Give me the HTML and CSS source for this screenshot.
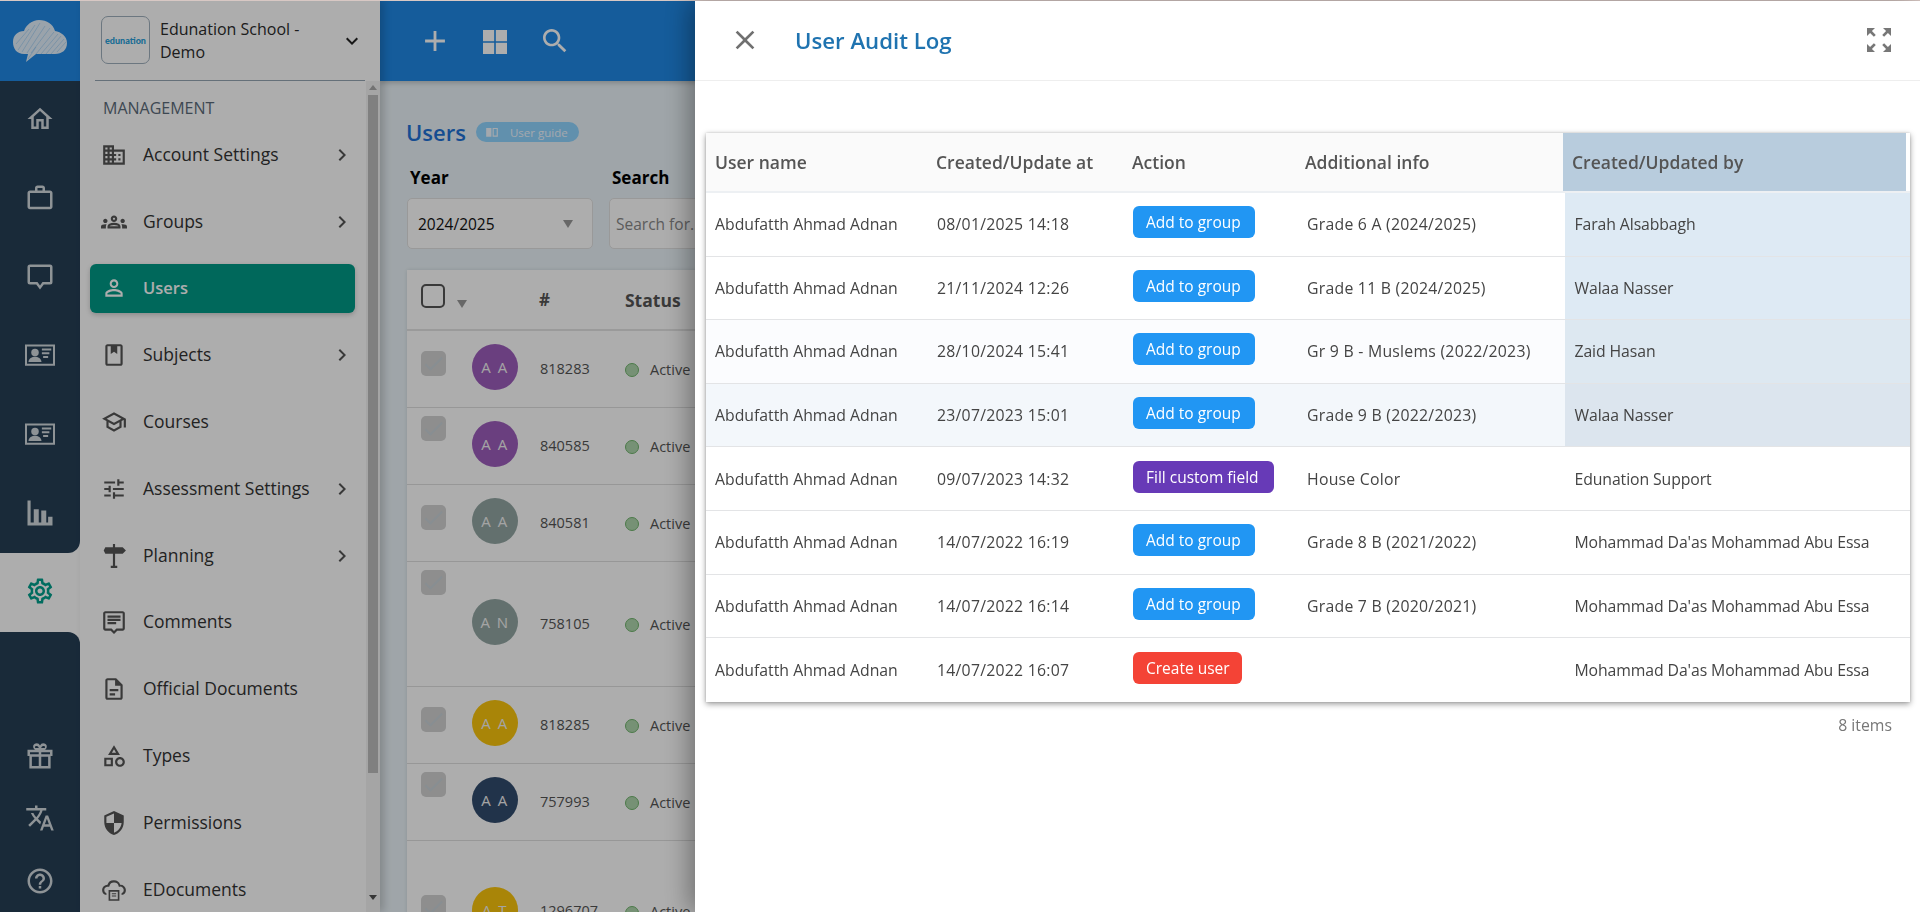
FILE: index.html
```html
<!DOCTYPE html>
<html lang="en">
<head>
<meta charset="utf-8">
<title>User Audit Log</title>
<link rel="stylesheet" href="styles.css">
</head>
<body>
<svg class="sprite" aria-hidden="true">
  <symbol id="i-home" viewBox="0 0 24 24"><path d="M12 5.69l5 4.5V18h-2v-6H9v6H7v-7.81l5-4.5M12 3L2 12h3v8h6v-6h2v6h6v-8h3L12 3z"/></symbol>
  <symbol id="i-work" viewBox="0 0 24 24"><path d="M14 6V4h-4v2h4zM4 8v11h16V8H4zm16-2c1.11 0 2 .89 2 2v11c0 1.11-.89 2-2 2H4c-1.11 0-2-.89-2-2l.01-11c0-1.11.88-2 1.99-2h4V4c0-1.11.89-2 2-2h4c1.11 0 2 .89 2 2v2h4z"/></symbol>
  <symbol id="i-bubble" viewBox="0 0 24 24"><path d="M4 2h16a2 2 0 0 1 2 2v12a2 2 0 0 1-2 2h-5l-3 4-3-4H4a2 2 0 0 1-2-2V4a2 2 0 0 1 2-2zm0 2v12h6l2 2.7 2-2.7h6V4H4z"/></symbol>
  <symbol id="i-card" viewBox="0 0 24 24"><path fill-rule="evenodd" d="M0 3.500h24v17H0v-17zm1.600 1.600v13.800h20.800V5.100H1.600z"/><circle cx="8" cy="10" r="3"/><path d="M2.800 17.500c0-2.900 3-4.200 5.200-4.200s5.200 1.300 5.200 4.200H2.800zM13.500 6.800h7.500v1.500h-7.500zM13.500 9.800h6v1.500h-6zM14.500 12.800h4v1.500h-4z"/></symbol>
  <symbol id="i-chart" viewBox="0 0 24 24"><path d="M2 2h2.500v20H2zM7 9h4v13H7zM13 10h4v12h-4zM18.500 15H22v7h-3.500zM2 19.500h20V22H2z"/></symbol>
  <symbol id="i-gear" viewBox="0 0 24 24"><path d="M19.430 12.980c.04-.32.07-.64.07-.98 0-.34-.03-.66-.07-.98l2.110-1.650c.19-.15.24-.42.12-.64l-2-3.460c-.09-.16-.26-.25-.44-.25-.06 0-.12.01-.17.03l-2.490 1c-.52-.4-1.080-.73-1.690-.98l-.38-2.650C14.460 2.180 14.250 2 14 2h-4c-.25 0-.46.18-.49.42l-.38 2.650c-.61.25-1.170.59-1.690.98l-2.490-1c-.06-.02-.12-.03-.18-.03-.17 0-.34.09-.43.25l-2 3.460c-.13.22-.07.49.12.64l2.110 1.650c-.04.32-.07.65-.07.98 0 .33.03.66.07.98l-2.110 1.650c-.19.15-.24.42-.12.64l2 3.460c.09.16.26.25.44.25.06 0 .12-.01.17-.03l2.490-1c.52.4 1.080.73 1.690.98l.38 2.650c.03.24.24.42.49.42h4c.25 0 .46-.18.49-.42l.38-2.650c.61-.25 1.170-.59 1.690-.98l2.490 1c.06.02.12.03.18.03.17 0 .34-.09.43-.25l2-3.460c.12-.22.07-.49-.12-.64l-2.110-1.650zm-1.980-1.710c.04.31.05.52.05.73 0 .21-.02.43-.05.73l-.14 1.130.89.7 1.080.84-.7 1.210-1.270-.51-1.040-.42-.9.68c-.43.32-.84.56-1.250.73l-1.060.43-.16 1.130-.2 1.350h-1.400l-.19-1.350-.16-1.130-1.060-.43c-.43-.18-.83-.41-1.230-.71l-.91-.7-1.060.43-1.270.51-.7-1.210 1.080-.84.89-.7-.14-1.130c-.03-.31-.05-.54-.05-.74s.02-.43.05-.73l.14-1.130-.89-.7-1.080-.84.7-1.210 1.270.51 1.040.42.9-.68c.43-.32.84-.56 1.250-.73l1.060-.43.16-1.130.2-1.350h1.390l.19 1.350.16 1.130 1.060.43c.43.18.83.41 1.230.71l.91.7 1.060-.43 1.270-.51.7 1.210-1.070.85-.89.7.14 1.130zM12 8c-2.210 0-4 1.790-4 4s1.790 4 4 4 4-1.790 4-4-1.790-4-4-4zm0 6c-1.100 0-2-.9-2-2s.9-2 2-2 2 .9 2 2-.9 2-2 2z"/></symbol>
  <symbol id="i-gift" viewBox="0 0 24 24"><path d="M2 7h20v5h-1.500v10h-17V12H2V7zm2 2v1.500h7V9H4zm9 0v1.500h7V9h-7zm-7.500 3.500V20H11v-7.500H5.500zm7.500 0V20h5.500v-7.500H13z"/><path d="M8.500 2a3 3 0 0 1 3.500 1.600A3 3 0 0 1 15.500 2c1.800.3 2.500 2.300 1.500 4l-1 1.200H8L7 6c-1-1.700-.3-3.700 1.500-4zm.3 2c-.8 0-1.100.9-.6 1.500H11c-.2-1-1-1.500-2.200-1.500zm6.400 0c-1.200 0-2 .5-2.200 1.500h2.800c.5-.6.2-1.500-.6-1.500z"/></symbol>
  <symbol id="i-translate" viewBox="0 0 24 24"><path d="M12.870 15.070l-2.540-2.510.03-.03c1.740-1.940 2.980-4.170 3.710-6.530H17V4h-7V2H8v2H1v1.990h11.170C11.500 7.920 10.440 9.750 9 11.350 8.070 10.320 7.300 9.190 6.690 8h-2c.73 1.630 1.730 3.170 2.980 4.560l-5.090 5.020L4 19l5-5 3.110 3.110.76-2.040zM18.500 10h-2L12 22h2l1.120-3h4.750L21 22h2l-4.500-12zm-2.620 7l1.620-4.330L19.120 17h-3.240z"/></symbol>
  <symbol id="i-help" viewBox="0 0 24 24"><path d="M11 18h2v-2h-2v2zm1-16C6.480 2 2 6.480 2 12s4.480 10 10 10 10-4.480 10-10S17.520 2 12 2zm0 18c-4.410 0-8-3.590-8-8s3.590-8 8-8 8 3.590 8 8-3.590 8-8 8zm0-14c-2.210 0-4 1.790-4 4h2c0-1.100.9-2 2-2s2 .9 2 2c0 2-3 1.750-3 5h2c0-2.250 3-2.500 3-5 0-2.210-1.790-4-4-4z"/></symbol>
  <symbol id="i-domain" viewBox="0 0 24 24"><path d="M12 7V3H2v18h20V7H12zM6 19H4v-2h2v2zm0-4H4v-2h2v2zm0-4H4V9h2v2zm0-4H4V5h2v2zm4 12H8v-2h2v2zm0-4H8v-2h2v2zm0-4H8V9h2v2zm0-4H8V5h2v2zm10 12h-8v-2h2v-2h-2v-2h2v-2h-2V9h8v10zm-2-8h-2v2h2v-2zm0 4h-2v2h2v-2z"/></symbol>
  <symbol id="i-groups" viewBox="0 0 24 24"><path d="M4 13c1.100 0 2-.9 2-2s-.9-2-2-2-2 .9-2 2 .9 2 2 2zm1.130 1.100c-.37-.06-.74-.1-1.130-.1-.99 0-1.930.21-2.780.58C.48 14.900 0 15.620 0 16.430V18h4.500v-1.610c0-.83.23-1.610.63-2.290zM20 13c1.100 0 2-.9 2-2s-.9-2-2-2-2 .9-2 2 .9 2 2 2zm4 3.430c0-.81-.48-1.530-1.220-1.850-.85-.37-1.790-.58-2.780-.58-.39 0-.76.04-1.130.1.4.68.63 1.460.63 2.290V18H24v-1.570zm-7.760-2.780C15.070 13.130 13.620 12.750 12 12.750c-1.620 0-3.070.39-4.240.9C6.680 14.130 6 15.210 6 16.390V18h12v-1.610c0-1.180-.68-2.260-1.760-2.740zM8.070 16c.09-.23.13-.39.91-.69.97-.38 1.990-.56 3.020-.56s2.050.18 3.020.56c.77.3.81.46.91.69H8.070zM12 8c.55 0 1 .45 1 1s-.45 1-1 1-1-.45-1-1 .45-1 1-1m0-2c-1.660 0-3 1.340-3 3s1.340 3 3 3 3-1.340 3-3-1.340-3-3-3z"/></symbol>
  <symbol id="i-person" viewBox="0 0 24 24"><path d="M12 5.900c1.160 0 2.100.94 2.100 2.100s-.94 2.100-2.100 2.100S9.900 9.160 9.900 8s.94-2.100 2.100-2.100m0 9c2.970 0 6.100 1.460 6.100 2.100v1.100H5.900V17c0-.64 3.130-2.100 6.100-2.100M12 4C9.790 4 8 5.790 8 8s1.790 4 4 4 4-1.790 4-4-1.790-4-4-4zm0 9c-2.670 0-8 1.340-8 4v3h16v-3c0-2.660-5.330-4-8-4z"/></symbol>
  <symbol id="i-book" viewBox="0 0 24 24"><path fill-rule="evenodd" d="M18 2H6c-1.100 0-2 .9-2 2v16c0 1.100.9 2 2 2h12c1.100 0 2-.9 2-2V4c0-1.100-.9-2-2-2zM6 4h3v7l3-2 3 2V4h3v16H6V4z"/></symbol>
  <symbol id="i-school" viewBox="0 0 24 24"><path d="M12 3L1 9l4 2.180v6L12 21l7-3.820v-6l2-1.090V17h2V9L12 3zm6.820 6L12 12.720 5.180 9 12 5.280 18.820 9zM17 15.990l-5 2.730-5-2.730v-3.720L12 15l5-2.730v3.720z"/></symbol>
  <symbol id="i-tune" viewBox="0 0 24 24"><path d="M3 17v2h6v-2H3zM3 5v2h10V5H3zm10 16v-2h8v-2h-8v-2h-2v6h2zM7 9v2H3v2h4v2h2V9H7zm14 4v-2H11v2h10zm-6-4h2V7h4V5h-4V3h-2v6z"/></symbol>
  <symbol id="i-sign" viewBox="0 0 24 24"><path d="M11 1h2v3h7l3 3-3 3h-7v11h2v2H9v-2h2V10H4L2.500 7 4 4h7z"/></symbol>
  <symbol id="i-chat" viewBox="0 0 24 24"><path d="M20 2H4c-1.100 0-2 .9-2 2v14c0 1.100.9 2 2 2h5l3 3 3-3h5c1.100 0 2-.9 2-2V4c0-1.100-.9-2-2-2zm0 16h-5.800L12 20.200 9.800 18H4V4h16v14zM6 12h8v2H6zm0-3h12v2H6zm0-3h12v2H6z"/></symbol>
  <symbol id="i-doc" viewBox="0 0 24 24"><path d="M8 16h5v2H8zm0-4h8v2H8zm6-10H6c-1.100 0-2 .9-2 2v16c0 1.100.89 2 1.990 2H18c1.100 0 2-.9 2-2V8l-6-6zm4 18H6V4h7v5h5v11z"/></symbol>
  <symbol id="i-category" viewBox="0 0 24 24"><path d="M12 2l-5.500 9h11L12 2zm0 3.840L13.930 9h-3.870L12 5.840zM17.500 13c-2.490 0-4.500 2.010-4.500 4.500s2.010 4.500 4.500 4.500 4.500-2.010 4.500-4.500-2.010-4.500-4.500-4.500zm0 7c-1.380 0-2.500-1.120-2.500-2.500s1.120-2.500 2.500-2.500 2.500 1.120 2.500 2.500-1.120 2.500-2.500 2.500zM3 21.500h8v-8H3v8zm2-6h4v4H5v-4z"/></symbol>
  <symbol id="i-shield" viewBox="0 0 24 24"><path d="M12 1L3 5v6c0 5.550 3.840 10.740 9 12 5.160-1.260 9-6.450 9-12V5l-9-4zm0 11h7c-.53 4.120-3.280 7.790-7 8.940V12H5V6.300l7-3.110V12z"/></symbol>
  <symbol id="i-cloud" viewBox="0 0 24 24"><path d="M12 3a6 6 0 0 1 5.700 4.200A5 5 0 0 1 23 12a4.800 4.800 0 0 1-4 4.700V15a3 3 0 0 0 2-3 3.200 3.200 0 0 0-3.600-3.100l-1 .1-.2-1A4.200 4.200 0 0 0 12 5a4.300 4.300 0 0 0-4.200 3.200l-.2.800-1 .1A3 3 0 0 0 3 12a3 3 0 0 0 2 3v1.700A5 5 0 0 1 1 12a5 5 0 0 1 5-4.900A6 6 0 0 1 12 3z"/><path fill-rule="evenodd" d="M7 12h10v10H7V12zm1.500 1.500v7h7v-7h-7zM10 15h4v1h-4zm0 2h4v1h-4z"/></symbol>
  <symbol id="i-right" viewBox="0 0 24 24"><path d="M10 6L8.590 7.410 13.170 12l-4.580 4.590L10 18l6-6z"/></symbol>
  <symbol id="i-down" viewBox="0 0 24 24"><path d="M16.590 8.590L12 13.170 7.410 8.590 6 10l6 6 6-6z"/></symbol>
  <symbol id="i-plus" viewBox="0 0 24 24"><path d="M19 13h-6v6h-2v-6H5v-2h6V5h2v6h6v2z"/></symbol>
  <symbol id="i-grid" viewBox="0 0 24 24"><path d="M0 0h11.200v11.200H0zM12.800 0H24v11.200H12.800zM0 12.800h11.200V24H0zM12.800 12.800H24V24H12.800z"/></symbol>
  <symbol id="i-search" viewBox="0 0 24 24"><path d="M15.500 14h-.79l-.28-.27C15.410 12.590 16 11.110 16 9.500 16 5.910 13.090 3 9.500 3S3 5.910 3 9.500 5.910 16 9.500 16c1.610 0 3.090-.59 4.230-1.570l.27.28v.79l5 4.990L20.490 19l-4.990-5zm-6 0C7.010 14 5 11.990 5 9.500S7.010 5 9.500 5 14 7.010 14 9.500 11.990 14 9.500 14z"/></symbol>
  <symbol id="i-close" viewBox="0 0 24 24"><path d="M19 6.410L17.590 5 12 10.590 6.410 5 5 6.410 10.590 12 5 17.590 6.410 19 12 13.410 17.590 19 19 17.590 13.410 12z"/></symbol>
  <symbol id="i-expand" viewBox="0 0 24 24"><path d="M15 3l2.300 2.300-2.890 2.870 1.420 1.420L18.700 6.700 21 9V3h-6zM3 9l2.300-2.300 2.870 2.890 1.420-1.420L6.700 5.300 9 3H3v6zm6 12l-2.300-2.300 2.890-2.870-1.420-1.420L5.300 17.300 3 15v6h6zm12-6l-2.300 2.300-2.870-2.890-1.420 1.420 2.890 2.870L15 21h6v-6z"/></symbol>
  <symbol id="i-check" viewBox="0 0 24 24"><path d="M9 16.170L4.830 12l-1.420 1.410L9 19 21 7l-1.410-1.410z"/></symbol>
  <symbol id="i-guide" viewBox="0 0 24 24"><path fill-rule="evenodd" d="M2 5h9v15H2zM13 5h9v15h-9zm2 2v11h5V7h-5z"/></symbol>
</svg>

<div class="app">
  <aside class="rail">
    <div class="rail-logo">
      <svg class="cloud" viewBox="0 0 54 43" aria-hidden="true">
        <path class="cloud-fill" d="M13 42l2-8H11C4 34 0 29 0 22c0-7 5-11 11-11 2-6 8-11 15-11 8 0 14 4 16 11 6 1 12 5 12 12s-5 11-12 11H23z"/>
        <path class="cloud-hatch" d="M3 24L16 9M5 30L22 5M9 32L27 3M14 33L32 6M18 33L37 8M23 34L41 12M28 34L45 14M33 34L48 16M38 34L51 19M44 32L53 22M15 39L23 27"/>
      </svg>
    </div>
    <nav class="rail-top">
      <div class="rail-item"><svg class="rail-icon"><use href="#i-home"/></svg></div>
      <div class="rail-item"><svg class="rail-icon"><use href="#i-work"/></svg></div>
      <div class="rail-item"><svg class="rail-icon"><use href="#i-bubble"/></svg></div>
      <div class="rail-item"><svg class="rail-icon"><use href="#i-card"/></svg></div>
      <div class="rail-item"><svg class="rail-icon"><use href="#i-card"/></svg></div>
      <div class="rail-item"><svg class="rail-icon"><use href="#i-chart"/></svg></div>
    </nav>
    <div class="rail-active"><svg class="rail-icon gear"><use href="#i-gear"/></svg></div>
    <nav class="rail-bottom">
      <div class="rail-item small"><svg class="rail-icon"><use href="#i-gift"/></svg></div>
      <div class="rail-item small"><svg class="rail-icon"><use href="#i-translate"/></svg></div>
      <div class="rail-item small"><svg class="rail-icon"><use href="#i-help"/></svg></div>
    </nav>
  </aside>

  <aside class="sidebar">
    <div class="school">
      <div class="school-logo">edunation</div>
      <div class="school-name">Edunation School - Demo</div>
      <svg class="school-caret"><use href="#i-down"/></svg>
    </div>
    <div class="side-body">
      <nav class="side-nav">
        <div class="side-label">MANAGEMENT</div>
        <a class="side-item"><span class="side-inner"><svg class="side-icon"><use href="#i-domain"/></svg><span class="side-text">Account Settings</span><svg class="side-more"><use href="#i-right"/></svg></span></a>
        <a class="side-item"><span class="side-inner"><svg class="side-icon"><use href="#i-groups"/></svg><span class="side-text">Groups</span><svg class="side-more"><use href="#i-right"/></svg></span></a>
        <a class="side-item active"><span class="side-inner"><svg class="side-icon"><use href="#i-person"/></svg><span class="side-text">Users</span></span></a>
        <a class="side-item"><span class="side-inner"><svg class="side-icon"><use href="#i-book"/></svg><span class="side-text">Subjects</span><svg class="side-more"><use href="#i-right"/></svg></span></a>
        <a class="side-item"><span class="side-inner"><svg class="side-icon"><use href="#i-school"/></svg><span class="side-text">Courses</span></span></a>
        <a class="side-item"><span class="side-inner"><svg class="side-icon"><use href="#i-tune"/></svg><span class="side-text">Assessment Settings</span><svg class="side-more"><use href="#i-right"/></svg></span></a>
        <a class="side-item"><span class="side-inner"><svg class="side-icon"><use href="#i-sign"/></svg><span class="side-text">Planning</span><svg class="side-more"><use href="#i-right"/></svg></span></a>
        <a class="side-item"><span class="side-inner"><svg class="side-icon"><use href="#i-chat"/></svg><span class="side-text">Comments</span></span></a>
        <a class="side-item"><span class="side-inner"><svg class="side-icon"><use href="#i-doc"/></svg><span class="side-text">Official Documents</span></span></a>
        <a class="side-item"><span class="side-inner"><svg class="side-icon"><use href="#i-category"/></svg><span class="side-text">Types</span></span></a>
        <a class="side-item"><span class="side-inner"><svg class="side-icon"><use href="#i-shield"/></svg><span class="side-text">Permissions</span></span></a>
        <a class="side-item"><span class="side-inner"><svg class="side-icon"><use href="#i-cloud"/></svg><span class="side-text">EDocuments</span></span></a>
      </nav>
      <div class="side-scroll">
        <span class="arrow-up"></span>
        <span class="thumb"></span>
        <span class="arrow-down"></span>
      </div>
    </div>
  </aside>

  <main class="main">
    <header class="topbar">
      <svg class="top-icon plus"><use href="#i-plus"/></svg>
      <svg class="top-icon grid"><use href="#i-grid"/></svg>
      <svg class="top-icon find"><use href="#i-search"/></svg>
    </header>
    <section class="content">
      <div class="title-row">
        <h1 class="page-title">Users</h1>
        <span class="guide"><svg class="guide-icon"><use href="#i-guide"/></svg>User guide</span>
      </div>
      <div class="filters">
        <div class="filter year">
          <label class="filter-label">Year</label>
          <div class="control">2024/2025<span class="control-caret"></span></div>
        </div>
        <div class="filter search">
          <label class="filter-label">Search</label>
          <div class="control placeholder">Search for...</div>
        </div>
      </div>
      <div class="user-card">
        <div class="user-head">
          <span class="head-box"></span><span class="head-caret"></span>
          <span class="head-num">#</span>
          <span class="head-status">Status</span>
        </div>
        <div class="user-row h77"><span class="check low"><svg><use href="#i-check"/></svg></span><span class="avatar purple">A A</span><span class="num">818283</span><span class="status"><i class="dot"></i>Active</span></div>
        <div class="user-row h77"><span class="check high"><svg><use href="#i-check"/></svg></span><span class="avatar purple">A A</span><span class="num">840585</span><span class="status"><i class="dot"></i>Active</span></div>
        <div class="user-row h77"><span class="check low"><svg><use href="#i-check"/></svg></span><span class="avatar grey">A A</span><span class="num">840581</span><span class="status"><i class="dot"></i>Active</span></div>
        <div class="user-row h125"><span class="check high"><svg><use href="#i-check"/></svg></span><span class="avatar grey">A N</span><span class="num">758105</span><span class="status"><i class="dot"></i>Active</span></div>
        <div class="user-row h77"><span class="check low"><svg><use href="#i-check"/></svg></span><span class="avatar amber">A A</span><span class="num">818285</span><span class="status"><i class="dot"></i>Active</span></div>
        <div class="user-row h77"><span class="check high"><svg><use href="#i-check"/></svg></span><span class="avatar navy">A A</span><span class="num">757993</span><span class="status"><i class="dot"></i>Active</span></div>
        <div class="user-row h142"><span class="check mid"><svg><use href="#i-check"/></svg></span><span class="avatar amber">A T</span><span class="num">1296707</span><span class="status"><i class="dot"></i>Active</span></div>
      </div>
    </section>
  </main>
</div>

<div class="overlay"></div>

<section class="panel">
  <header class="panel-head">
    <svg class="panel-close"><use href="#i-close"/></svg>
    <h2 class="panel-title">User Audit Log</h2>
    <svg class="panel-expand"><use href="#i-expand"/></svg>
  </header>
  <div class="audit">
    <table class="audit-table audit-head">
      <colgroup><col class="hc1"><col class="hc2"><col class="hc3"><col class="hc4"><col class="hc5"><col class="hc6"></colgroup>
      <thead>
        <tr><th>User name</th><th>Created/Update at</th><th>Action</th><th>Additional info</th><th class="sorted">Created/Updated by</th><th class="gutter"></th></tr>
      </thead>
    </table>
    <table class="audit-table audit-body">
      <colgroup><col class="bc1"><col class="bc2"><col class="bc3"><col class="bc4"><col class="bc5"></colgroup>
      <tbody>
        <tr><td>Abdufatth Ahmad Adnan</td><td>08/01/2025 14:18</td><td><span class="tag blue">Add to group</span></td><td>Grade 6 A (2024/2025)</td><td class="sorted">Farah Alsabbagh</td></tr>
        <tr><td>Abdufatth Ahmad Adnan</td><td>21/11/2024 12:26</td><td><span class="tag blue">Add to group</span></td><td>Grade 11 B (2024/2025)</td><td class="sorted">Walaa Nasser</td></tr>
        <tr class="tint-a"><td>Abdufatth Ahmad Adnan</td><td>28/10/2024 15:41</td><td><span class="tag blue">Add to group</span></td><td>Gr 9 B - Muslems (2022/2023)</td><td class="sorted">Zaid Hasan</td></tr>
        <tr class="tint-b"><td>Abdufatth Ahmad Adnan</td><td>23/07/2023 15:01</td><td><span class="tag blue">Add to group</span></td><td>Grade 9 B (2022/2023)</td><td class="sorted">Walaa Nasser</td></tr>
        <tr><td>Abdufatth Ahmad Adnan</td><td>09/07/2023 14:32</td><td><span class="tag purple-tag">Fill custom field</span></td><td>House Color</td><td>Edunation Support</td></tr>
        <tr><td>Abdufatth Ahmad Adnan</td><td>14/07/2022 16:19</td><td><span class="tag blue">Add to group</span></td><td>Grade 8 B (2021/2022)</td><td>Mohammad Da'as Mohammad Abu Essa</td></tr>
        <tr><td>Abdufatth Ahmad Adnan</td><td>14/07/2022 16:14</td><td><span class="tag blue">Add to group</span></td><td>Grade 7 B (2020/2021)</td><td>Mohammad Da'as Mohammad Abu Essa</td></tr>
        <tr><td>Abdufatth Ahmad Adnan</td><td>14/07/2022 16:07</td><td><span class="tag red">Create user</span></td><td></td><td>Mohammad Da'as Mohammad Abu Essa</td></tr>
      </tbody>
    </table>
  </div>
  <div class="audit-count">8 items</div>
</section>
</body>
</html>
```

FILE: styles.css
```css
* { box-sizing: border-box; }
html, body { margin: 0; height: 912px; overflow: hidden; }
body {
  border-top: 1px solid #d8c8c4;
  font-family: "Open Sans", "Noto Sans", "Liberation Sans", sans-serif;
  color: #333;
  background: #fff;
}
.sprite { position: absolute; width: 0; height: 0; overflow: hidden; }

.app { display: flex; height: 911px; overflow: hidden; }

/* icon rail */
.rail { width: 80px; flex: none; display: flex; flex-direction: column; background: #fff; }
.rail-logo { height: 80px; background: #1f88e5; display: flex; align-items: center; justify-content: center; }
.cloud { width: 54px; height: 43px; }
.cloud-fill { fill: #fff; opacity: .88; }
.cloud-hatch { stroke: #1f88e5; stroke-width: .6; opacity: .4; fill: none; }
.rail-top { height: 472px; background: #253e55; border-bottom-right-radius: 12px; }
.rail-active { height: 79px; display: flex; align-items: center; justify-content: center; padding-bottom: 4px; }
.rail-bottom { flex: 1; background: #253e55; border-top-right-radius: 12px; display: flex; flex-direction: column; justify-content: flex-end; }
.rail-item { height: 78.7px; display: flex; align-items: center; justify-content: center; padding-bottom: 2px; }
.rail-item.small { height: 62.5px; padding-bottom: 0; }
.rail-icon { width: 30px; height: 30px; fill: #d2d9de; }
.rail-icon.gear { fill: #00a08c; }

/* sidebar */
.sidebar { width: 300px; flex: none; background: #fff; display: flex; flex-direction: column; box-shadow: 4px 0 8px rgba(0,0,0,.18); z-index: 2; }
.school { height: 80px; margin: 0 15px; padding: 0 0 0 6px; display: flex; align-items: center; border-bottom: 1px solid #96a6b3; flex: none; }
.school-logo { width: 49px; height: 48px; border: 1px solid #9fb0bd; border-radius: 7px; display: flex; align-items: center; justify-content: center; font-family: "Lato", sans-serif; font-size: 9px; font-weight: 900; color: #29a0da; margin-top: -1px; }
.school-name { width: 160px; margin-left: 10px; font-size: 16px; line-height: 23px; color: #2b2b2b; }
.school-caret { width: 24px; height: 24px; margin-left: 20px; fill: #222; }
.side-body { flex: 1; min-height: 0; display: flex; }
.side-nav { flex: 1; min-width: 0; padding-left: 10px; overflow: hidden; }
.side-label { height: 40.5px; padding: 16px 0 0 13px; font-size: 16px; line-height: 22px; color: #5b6b7a; }
.side-item { height: 66.8px; display: flex; align-items: center; color: #333; }
.side-inner { width: 265px; height: 49px; display: flex; align-items: center; padding-left: 12px; border-radius: 6px; }
.side-icon { width: 26px; height: 26px; fill: #555; flex: none; margin-left: -1px; }
.side-text { flex: 1; margin: -2px 0 0 16px; font-size: 17.500px; white-space: nowrap; }
.side-more { width: 24px; height: 24px; fill: #555; flex: none; margin-right: 1px; }
.side-item.active .side-inner { background: #009a87; color: #fff; box-shadow: 0 2px 5px rgba(0,0,0,.2); font-weight: 600; }
.side-item.active .side-text { font-size: 16.500px; }
.side-item.active .side-icon { fill: #fff; }
.side-scroll { width: 14px; flex: none; background: #f3f3f3; display: flex; flex-direction: column; align-items: center; padding-top: 4px; }
.arrow-up { width: 0; height: 0; border: 4px solid transparent; border-top: 0; border-bottom: 5px solid #aaa; }
.arrow-down { width: 0; height: 0; border: 4px solid transparent; border-bottom: 0; border-top: 5px solid #505050; margin-top: 122px; }
.thumb { width: 10px; height: 678px; background: #bdbdbd; margin-top: 5px; }

/* main */
.main { flex: 1; min-width: 0; display: flex; flex-direction: column; background: #ebf4f9; }
.topbar { height: 80px; flex: none; background: #1f88e5; display: flex; align-items: center; box-shadow: 0 2px 5px rgba(0,0,0,.2); }
.top-icon { fill: #fff; flex: none; }
.top-icon.plus { width: 34px; height: 34px; margin-left: 38px; }
.top-icon.grid { width: 24px; height: 24px; margin-left: 31px; margin-top: 1px; }
.top-icon.find { width: 32px; height: 32px; margin-left: 32px; }
.content { padding: 38px 0 0 26px; }
.title-row { display: flex; align-items: center; height: 26px; }
.page-title { margin: 0; font-size: 22px; font-weight: 600; color: #1f72d6; line-height: 26px; }
.guide { margin-left: 10px; width: 103px; height: 20px; border-radius: 10px; background: #8fd4ff; color: #f2f8ff; font-size: 11.500px; display: flex; align-items: center; padding-left: 9px; }
.guide-icon { width: 14px; height: 14px; fill: #f2f8ff; margin-right: 11px; }
.filters { display: flex; gap: 16px; margin-top: 18px; padding-left: 1px; }
.filter-label { display: block; height: 35px; padding: 3px 0 0 3px; font-size: 17px; font-weight: 700; color: #000; line-height: 24px; }
.control { height: 51px; border: 1px solid #e2e2e2; border-radius: 5px; background: #fff; font-size: 15.500px; color: #111; display: flex; align-items: center; padding-left: 10px; position: relative; white-space: nowrap; overflow: hidden; }
.filter.year { width: 186px; }
.filter.search { width: 300px; }
.control.placeholder { color: #888; padding-left: 6px; }
.control-caret { position: absolute; right: 19px; top: 21px; border: 5px solid transparent; border-bottom: 0; border-top: 8px solid #999; }
.user-card { width: 1200px; margin: 21px 0 0 1px; background: #fff; box-shadow: 0 0 4px rgba(0,0,0,.12); }
.user-head { height: 61px; display: flex; align-items: center; border-bottom: 2px solid #e4e4e4; padding-left: 14px; }
.head-box { width: 24px; height: 24px; border: 2px solid #555; border-radius: 5px; margin-top: -8px; }
.head-caret { margin: 8px 0 0 12px; border: 5px solid transparent; border-bottom: 0; border-top: 8px solid #999; }
.head-num { margin-left: 72px; font-size: 17px; font-weight: 700; color: #555; }
.head-status { margin-left: 75px; font-size: 17.500px; font-weight: 700; color: #555; }
.user-row { display: grid; grid-template-columns: 51px 68px 85px 1fr; align-items: center; border-bottom: 1px solid #dfdfdf; padding-left: 14px; }
.h77 { height: 77px; }
.h125 { height: 125px; }
.h142 { height: 142px; }
.check { width: 25px; height: 25px; border-radius: 5px; background: #d1d1d1; display: block; align-self: start; }
.check svg { width: 25px; height: 25px; fill: #c9d1d7; display: block; }
.check.low { margin-top: 20px; }
.check.high { margin-top: 8px; }
.check.mid { align-self: center; margin-top: -8px; }
.avatar { width: 46px; height: 46px; border-radius: 50%; display: flex; align-items: center; justify-content: center; font-size: 15px; color: #f2f2f2; letter-spacing: 1.5px; margin-top: -4px; }
.avatar.purple { background: #9d5dbc; }
.avatar.grey { background: #92a6a3; }
.avatar.amber { background: #f9c40c; }
.avatar.navy { background: #324c6d; }
.num { font-size: 14.500px; color: #555; margin-top: -2px; }
.status { font-size: 14.500px; color: #555; display: flex; align-items: center; }
.dot { width: 14px; height: 14px; border-radius: 50%; background: #afd6ad; border: 1px solid #6fb46c; margin-right: 11px; margin-top: 2px; }

/* dim layer */
.overlay { position: fixed; inset: 1px 0 0 0; background: rgba(0,0,0,.32); z-index: 5; }

/* audit panel */
.panel { position: fixed; top: 1px; right: 0; bottom: 0; width: 1225px; background: #fff; z-index: 6; box-shadow: -6px 0 24px rgba(0,0,0,.35); display: flex; flex-direction: column; }
.panel-head { height: 80px; flex: none; display: flex; align-items: center; border-bottom: 1px solid #eee; padding: 0 25px 0 34px; }
.panel-close { width: 32px; height: 32px; fill: #707070; flex: none; margin-top: -1px; }
.panel-title { margin: 0 0 0 34px; flex: 1; font-size: 22.200px; font-weight: 600; color: #1f73b0; }
.panel-expand { width: 32px; height: 32px; fill: #777; flex: none; margin-top: -2px; }
.audit { margin: 52px 15px 0 11px; width: 1204px; box-shadow: 0 2px 6px rgba(0,0,0,.4), 0 0 2px rgba(0,0,0,.15); }
.audit-table { border-collapse: separate; border-spacing: 0; table-layout: fixed; width: 1204px; }
.hc1 { width: 221px; } .hc2 { width: 196px; } .hc3 { width: 173px; } .hc4 { width: 267px; } .hc5 { width: 343px; } .hc6 { width: 4px; }
.bc1 { width: 222px; } .bc2 { width: 196px; } .bc3 { width: 174px; } .bc4 { width: 267px; } .bc5 { width: 345px; }
.audit-head th { height: 60px; padding: 0 0 0 9px; background: #fafafa; border-bottom: 2px solid #edf0f3; text-align: left; font-size: 17.500px; font-weight: 600; color: #555; white-space: nowrap; }
.audit-head th.sorted { background: #b8ccdd; }
.audit-head th.gutter { padding: 0; background: #fff; }
.audit-body td { height: 63.6px; padding: 0 0 0 9px; border-bottom: 1px solid #e3e4e6; font-size: 15.800px; color: #444; white-space: nowrap; background: #fff; }
.audit-body td:nth-child(2), .audit-body td:nth-child(4) { letter-spacing: .25px; }
.audit-body td:last-child { padding-left: 9.500px; letter-spacing: -.1px; }
.audit-body td.sorted { background: #deeaf4; }
.audit-body tr:last-child td { border-bottom: 0; }
.audit-body tr.tint-a td { background: #fbfcfe; }
.audit-body tr.tint-a td.sorted { background: #dde8f1; }
.audit-body tr.tint-b td { background: #f3f7fb; }
.audit-body tr.tint-b td.sorted { background: #dce5ee; }
.tag { display: inline-block; height: 32px; line-height: 32px; padding: 0 13px; border-radius: 6px; color: #fff; font-size: 15.500px; font-weight: 500; position: relative; top: -2px; vertical-align: middle; white-space: nowrap; }
.tag.blue { background: #2196f3; width: 122px; }
.tag.purple-tag { background: #673ab7; width: 141px; }
.tag.red { background: #f44336; width: 109px; }
.audit-count { margin-top: 12px; padding-right: 28px; text-align: right; font-size: 15.800px; color: #777; }
```
